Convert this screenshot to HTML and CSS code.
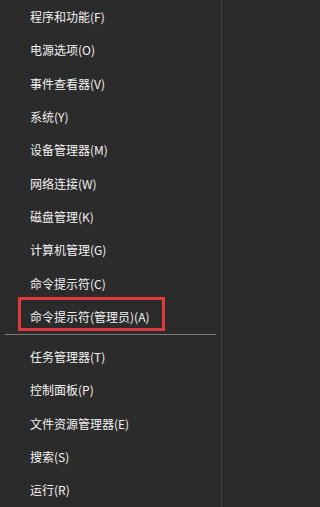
FILE: index.html
```html
<!DOCTYPE html>
<html lang="zh-CN">
<head>
<meta charset="utf-8">
<title>菜单</title>
<link rel="stylesheet" href="styles.css">
</head>
<body>
<nav class="menu">
  <div class="item">程序和功能(F)</div>
  <div class="item">电源选项(O)</div>
  <div class="item">事件查看器(V)</div>
  <div class="item">系统(Y)</div>
  <div class="item">设备管理器(M)</div>
  <div class="item">网络连接(W)</div>
  <div class="item">磁盘管理(K)</div>
  <div class="item">计算机管理(G)</div>
  <div class="item">命令提示符(C)</div>
  <div class="item item-marked">命令提示符(管理员)(A)</div>
  <div class="separator"></div>
  <div class="item">任务管理器(T)</div>
  <div class="item">控制面板(P)</div>
  <div class="item">文件资源管理器(E)</div>
  <div class="item">搜索(S)</div>
  <div class="item">运行(R)</div>
</nav>
</body>
</html>
```
FILE: styles.css
```css
html, body {
  margin: 0;
  padding: 0;
  background: #2b2b2b;
}
body {
  width: 225px;
  height: 507px;
  overflow: hidden;
  font-family: "Noto Sans CJK SC", "Noto Sans", sans-serif;
  font-size: 12px;
  color: #f2f2f2;
}
.menu {
  width: 221px;
  height: 507px;
  border-right: 1px solid #3d3d3d;
  display: flex;
  flex-direction: column;
}
.item {
  position: relative;
  height: 33.33px;
  flex: none;
  display: flex;
  align-items: center;
  padding-left: 30px;
  white-space: nowrap;
}
.item-marked::after {
  content: "";
  position: absolute;
  left: 18px;
  top: -3px;
  width: 147px;
  height: 34px;
  box-sizing: border-box;
  border: 3px solid #e23a3c;
}
.separator {
  flex: none;
  height: 1px;
  margin: 1px 5px 4.7px 5px;
  background: #7c7c7c;
}
```
